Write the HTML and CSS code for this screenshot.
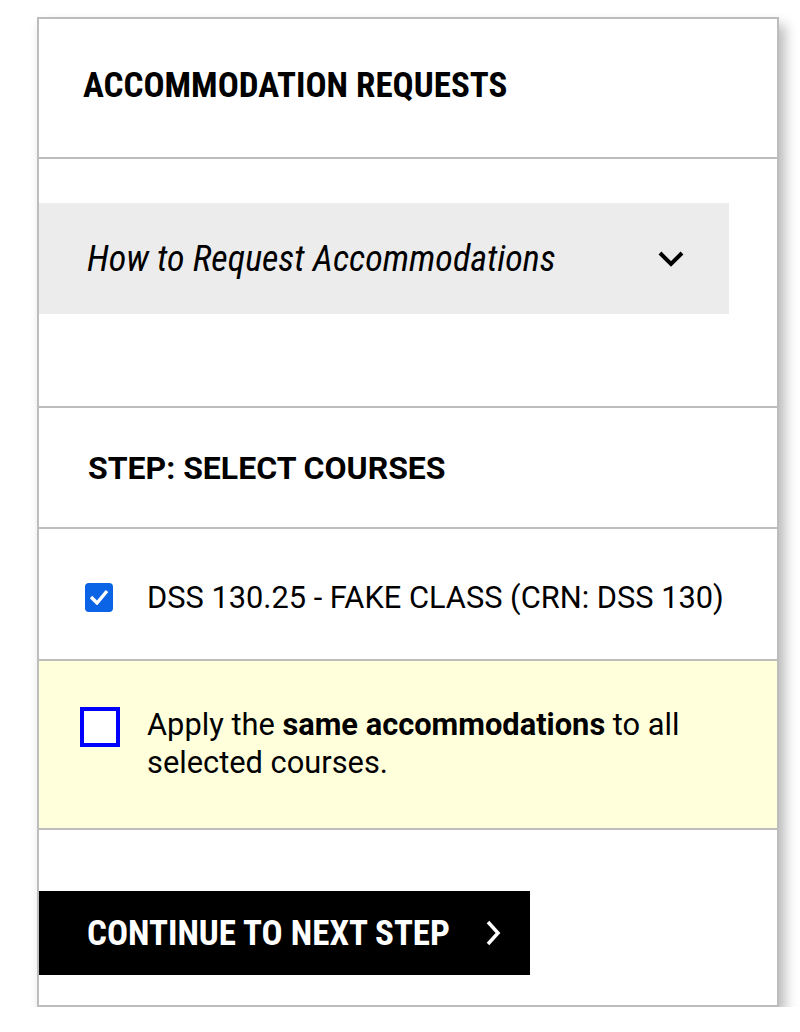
FILE: index.html
```html
<!DOCTYPE html>
<html lang="en">

<head>
    <meta charset="UTF-8">
    <meta name="viewport" content="width=device-width, initial-scale=1.0">
    <title>Accommodation Requests</title>
    <link rel="stylesheet" href="styles.css">
</head>

<body>
    <div class="card">
        <div class="section header">
            <h2>ACCOMMODATION REQUESTS</h2>
        </div>

        <div class="section info">
            <div class="accordion">
                <span>How to Request Accommodations</span>
                <svg class="chevron" width="30" height="20" viewBox="0 0 30 20">
                    <path d="M4 4 L15 15 L26 4" fill="none" stroke="#000" stroke-width="4" />
                </svg>
            </div>
        </div>

        <div class="section step">
            <h3>STEP: SELECT COURSES</h3>
        </div>

        <div class="section course">
            <span class="check checked">
                <svg width="20" height="16" viewBox="0 0 20 16">
                    <path d="M2 8 L8 14 L18 2" fill="none" stroke="#fff" stroke-width="3.4" />
                </svg>
            </span>
            <span>DSS 130.25 - FAKE CLASS (CRN: DSS 130)</span>
        </div>

        <div class="section same">
            <span class="check empty"></span>
            <p>Apply the <b>same accommodations</b> to all selected courses.</p>
        </div>

        <div class="section actions">
            <button class="next">
                CONTINUE TO NEXT STEP
                <svg width="18" height="28" viewBox="0 0 18 28">
                    <path d="M4 3 L14 14 L4 25" fill="none" stroke="#fff" stroke-width="3.5" />
                </svg>
            </button>
        </div>
    </div>
</body>

</html>
```

FILE: styles.css
```css
body {
    margin: 0;
    background-color: #fff;
    color: #000;
    font-family: Roboto, "Liberation Sans", sans-serif;
}

.card {
    width: 738px;
    margin: 17px 0 0 37px;
    border: 2px solid #bdbdbd;
    box-shadow: 6px 8px 12px rgba(0, 0, 0, 0.28);
}

/* every block is sized with its bottom rule included */
.section {
    box-sizing: border-box;
    border-bottom: 2px solid #bdbdbd;
}

.section:last-child {
    border-bottom: none;
}

h2,
h3 {
    margin: 0;
    font-weight: 700;
}

.header {
    height: 140px;
    display: flex;
    align-items: center;
    padding: 0 0 6px 44px;
}

.header h2 {
    font-family: "Roboto Condensed", Roboto, sans-serif;
    font-size: 35px;
}

.info {
    height: 249px;
    padding-top: 44px;
}

.accordion {
    width: 690px;
    height: 111px;
    box-sizing: border-box;
    display: flex;
    align-items: center;
    justify-content: space-between;
    padding: 0 43px 0 48px;
    background-color: #ececec;
    font-family: "Roboto Condensed", Roboto, sans-serif;
    font-style: italic;
    font-size: 36px;
}

.step {
    height: 121px;
    display: flex;
    align-items: center;
    padding-left: 49px;
}

.step h3 {
    font-size: 32px;
}

.course {
    height: 132px;
    display: flex;
    align-items: center;
    gap: 34px;
    padding: 6px 0 0 46px;
    font-size: 30.8px;
}

.check {
    flex-shrink: 0;
    box-sizing: border-box;
    display: flex;
    align-items: center;
    justify-content: center;
}

.checked {
    width: 28px;
    height: 29px;
    border-radius: 4px;
    background-color: #0b63e5;
}

.empty {
    width: 40px;
    height: 40px;
    margin-top: 1px;
    border: 4px solid #0000ff;
    background-color: #fff;
}

.same {
    height: 169px;
    display: flex;
    align-items: flex-start;
    gap: 27px;
    padding: 45px 0 0 41px;
    background-color: #ffffdc;
}

.same p {
    margin: 0;
    font-size: 30.8px;
    line-height: 38px;
    max-width: 570px;
}

.actions {
    height: 175px;
    padding-top: 61px;
}

.next {
    width: 491px;
    height: 84px;
    display: flex;
    align-items: center;
    gap: 34px;
    padding: 0 0 0 48px;
    border: none;
    background-color: #000;
    color: #fff;
    font-family: "Roboto Condensed", Roboto, sans-serif;
    font-size: 35px;
    font-weight: 700;
    cursor: pointer;
}
```
